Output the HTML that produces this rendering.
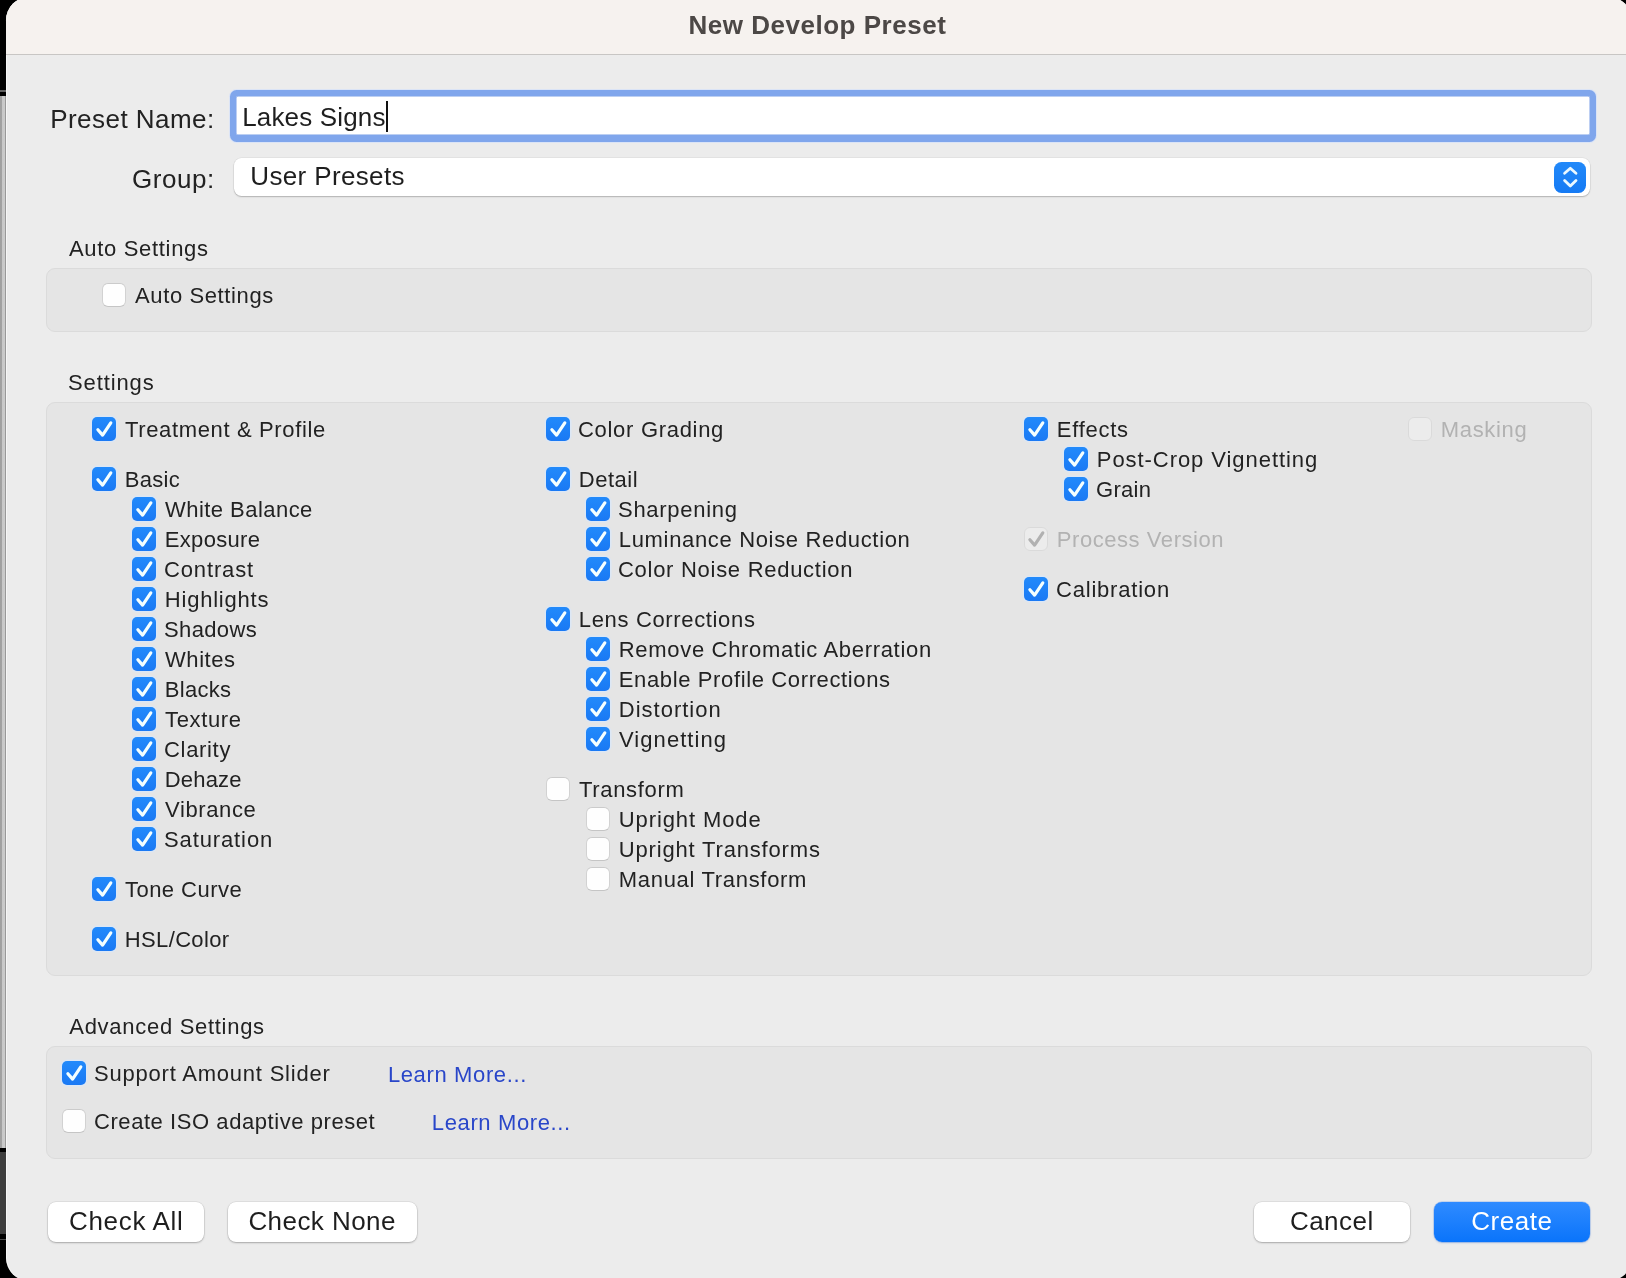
<!DOCTYPE html>
<html lang="en"><head><meta charset="utf-8"><title>New Develop Preset</title>
<style>
html,body{margin:0;padding:0}
body{width:1626px;height:1278px;overflow:hidden;background:#000;position:relative;font-family:"Liberation Sans",sans-serif;color:#222}
.abs,.t,.cb,.box,.btn{position:absolute}
.bg1{left:0;top:96px;width:6px;height:1051.5px;background:linear-gradient(90deg,#a0a0a0 0,#a2a2a2 1.8px,#c8c8c8 2.2px,#cbcbcb 4.6px,#989898 5.2px,#9a9a9a 6px)}
.bg2{left:0;top:1152px;width:6px;height:82px;background:#3d3d3d}
.dlg{left:6px;top:-3.3px;width:1626px;height:1284.6px;background:#ececec;border-radius:23.3px;overflow:hidden;position:absolute;box-shadow:inset 1px 0 0 rgba(255,255,255,.6)}
.tbar{left:0;top:0;width:100%;height:57.3px;background:#f6f2ef;border-bottom:1px solid #c8c6c4;position:absolute}
.t{font-size:22px;line-height:30px;height:30px;white-space:nowrap}
.t.b{font-size:26px}
.box{background:#e5e5e5;border:1px solid #dbdbdb;border-radius:9px;box-sizing:border-box}
.cb{width:24px;height:24px;border-radius:5px;box-sizing:border-box;display:block}
.cb.on{background:linear-gradient(#228afb,#1a79f4);box-shadow:0 0 0 1.5px rgba(214,232,255,.6)}
.cb.off{background:#fefefe;border:1px solid #d2d2d2;border-top-color:#cbcbcb;border-bottom-color:#c5c5c5;border-radius:6px}
.cb.dis{background:#ececec;border-color:#dadada}
.cb svg{width:24px;height:24px;display:block;fill:none;stroke:#f4ffff;stroke-width:3.2;stroke-linecap:round;stroke-linejoin:round}
.cb.off svg{margin:-1px}
.cb.don svg{stroke:#b1b1b1}
.btn{height:40px;top:1202px;border-radius:8px;background:#fff;box-shadow:0 0 0 .5px rgba(0,0,0,.10),0 1px 2px rgba(0,0,0,.25);box-sizing:border-box}
.btn.pri{background:linear-gradient(#2f8bff,#0a74fb);box-shadow:0 0 0 .5px rgba(0,90,230,.3),0 1px 2px rgba(0,80,200,.25)}
.layer{position:absolute;left:0;top:0;width:1626px;height:1278px;will-change:transform}
.bg0{left:0;top:90.4px;width:6px;height:1.4px;background:#616161}
.bg3{left:0;top:1238.5px;width:6px;height:1.3px;background:#4a4a4a}
</style></head>
<body>
<div class="abs bg1"></div><div class="abs bg2"></div><div class="abs bg0"></div><div class="abs bg3"></div>
<div class="dlg"><div class="tbar"></div></div>
<div class="abs" style="left:230px;top:90px;width:1365.5px;height:51.7px;background:#80a6ec;border-radius:6.5px;box-shadow:0 0 0 1px rgba(205,222,255,.55)"></div>
<div class="abs" style="left:236px;top:96.4px;width:1353.5px;height:39.1px;background:#fff;border-radius:2px;box-shadow:inset 0 0 0 .5px #7a9fe6"></div>
<div class="abs" style="left:386.2px;top:100.5px;width:1.7px;height:31px;background:#111"></div>
<div class="abs" style="left:234px;top:158.3px;width:1356px;height:37.6px;background:#fff;border-radius:7.5px;box-shadow:0 0 0 .5px rgba(0,0,0,.07),0 1px 1.5px rgba(0,0,0,.22)"></div>
<div class="abs" style="left:1554px;top:162px;width:32.3px;height:30.5px;border-radius:7.5px;background:linear-gradient(#2289f9,#157af4)"><svg width="32.3" height="30.5" viewBox="0 0 32.3 30.5" style="display:block;fill:none;stroke:#eaf8ff;stroke-width:2.8;stroke-linecap:round;stroke-linejoin:round"><path d="M10.6 11.3 L16.3 6.3 L22 11.3 M10.6 18.4 L16.3 24.1 L22 18.4"/></svg></div>
<div class="box" style="left:46px;top:268px;width:1546px;height:64px"></div>
<div class="box" style="left:46px;top:402px;width:1546px;height:573.5px"></div>
<div class="box" style="left:46px;top:1046px;width:1546px;height:113.3px"></div>
<div class="btn" style="left:47.8px;width:156.4px"></div>
<div class="btn" style="left:228px;width:188.5px"></div>
<div class="btn" style="left:1253.5px;width:156.5px"></div>
<div class="btn pri" style="left:1434px;width:156px"></div>

<div class="layer">
<span class="t" style="left:125.00px;top:415px;letter-spacing:0.641px">Treatment &amp; Profile</span>
<span class="t" style="left:124.80px;top:465px;letter-spacing:0.301px">Basic</span>
<span class="t" style="left:165.00px;top:495px;letter-spacing:0.457px">White Balance</span>
<span class="t" style="left:164.80px;top:525px;letter-spacing:0.313px">Exposure</span>
<span class="t" style="left:164.00px;top:555px;letter-spacing:0.853px">Contrast</span>
<span class="t" style="left:164.80px;top:585px;letter-spacing:0.788px">Highlights</span>
<span class="t" style="left:164.00px;top:615px;letter-spacing:0.366px">Shadows</span>
<span class="t" style="left:165.00px;top:645px;letter-spacing:0.573px">Whites</span>
<span class="t" style="left:164.80px;top:675px;letter-spacing:0.261px">Blacks</span>
<span class="t" style="left:165.00px;top:705px;letter-spacing:0.632px">Texture</span>
<span class="t" style="left:164.00px;top:735px;letter-spacing:0.677px">Clarity</span>
<span class="t" style="left:164.80px;top:765px;letter-spacing:0.161px">Dehaze</span>
<span class="t" style="left:165.00px;top:795px;letter-spacing:0.615px">Vibrance</span>
<span class="t" style="left:164.00px;top:825px;letter-spacing:0.883px">Saturation</span>
<span class="t" style="left:125.00px;top:875px;letter-spacing:0.459px">Tone Curve</span>
<span class="t" style="left:124.80px;top:925px;letter-spacing:0.356px">HSL/Color</span>
<span class="t" style="left:578.00px;top:415px;letter-spacing:0.699px">Color Grading</span>
<span class="t" style="left:578.80px;top:465px;letter-spacing:0.508px">Detail</span>
<span class="t" style="left:618.00px;top:495px;letter-spacing:0.711px">Sharpening</span>
<span class="t" style="left:618.80px;top:525px;letter-spacing:0.661px">Luminance Noise Reduction</span>
<span class="t" style="left:618.00px;top:555px;letter-spacing:0.716px">Color Noise Reduction</span>
<span class="t" style="left:578.80px;top:605px;letter-spacing:0.653px">Lens Corrections</span>
<span class="t" style="left:618.80px;top:635px;letter-spacing:0.679px">Remove Chromatic Aberration</span>
<span class="t" style="left:618.80px;top:665px;letter-spacing:0.629px">Enable Profile Corrections</span>
<span class="t" style="left:618.80px;top:695px;letter-spacing:1.002px">Distortion</span>
<span class="t" style="left:619.00px;top:725px;letter-spacing:1.065px">Vignetting</span>
<span class="t" style="left:579.00px;top:775px;letter-spacing:0.663px">Transform</span>
<span class="t" style="left:618.80px;top:805px;letter-spacing:0.897px">Upright Mode</span>
<span class="t" style="left:618.80px;top:835px;letter-spacing:0.826px">Upright Transforms</span>
<span class="t" style="left:618.80px;top:865px;letter-spacing:0.689px">Manual Transform</span>
<span class="t" style="left:1056.80px;top:415px;letter-spacing:0.725px">Effects</span>
<span class="t" style="left:1096.80px;top:445px;letter-spacing:0.939px">Post-Crop Vignetting</span>
<span class="t" style="left:1096.00px;top:475px;letter-spacing:0.310px">Grain</span>
<span class="t" style="left:1056.80px;top:525px;letter-spacing:0.555px;color:#b2b2b2">Process Version</span>
<span class="t" style="left:1056.00px;top:575px;letter-spacing:0.797px">Calibration</span>
<span class="t" style="left:1440.80px;top:415px;letter-spacing:0.653px;color:#b2b2b2">Masking</span>
<span class="t" style="left:135.00px;top:281px;letter-spacing:0.620px">Auto Settings</span>
<span class="t" style="left:94.00px;top:1059px;letter-spacing:0.784px">Support Amount Slider</span>
<span class="t" style="left:94.00px;top:1107px;letter-spacing:0.565px">Create ISO adaptive preset</span>
<span class="t" style="left:387.90px;top:1060px;letter-spacing:0.631px;color:#2946c9">Learn More...</span>
<span class="t" style="left:431.80px;top:1108px;letter-spacing:0.631px;color:#2946c9">Learn More...</span>
<span class="t" style="left:69.00px;top:234px;letter-spacing:0.678px">Auto Settings</span>
<span class="t" style="left:68.00px;top:368px;letter-spacing:0.887px">Settings</span>
<span class="t" style="left:69.30px;top:1012px;letter-spacing:0.709px">Advanced Settings</span>
<span class="t b" style="left:688.40px;top:10px;letter-spacing:0.524px;color:#4c4846;font-weight:bold">New Develop Preset</span>
<span class="t b" style="left:50.20px;top:104px;letter-spacing:0.462px">Preset Name:</span>
<span class="t b" style="left:131.90px;top:164px;letter-spacing:0.568px">Group:</span>
<span class="t b" style="left:242.20px;top:102px;letter-spacing:0.166px;color:#1e1e1e">Lakes Signs</span>
<span class="t b" style="left:250.30px;top:161px;letter-spacing:0.358px;color:#1e1e1e">User Presets</span>
<span class="t b" style="left:69.00px;top:1206px;letter-spacing:0.670px;color:#1e1e1e">Check All</span>
<span class="t b" style="left:248.40px;top:1206px;letter-spacing:0.443px;color:#1e1e1e">Check None</span>
<span class="t b" style="left:1289.90px;top:1206px;letter-spacing:0.489px;color:#1e1e1e">Cancel</span>
<span class="t b" style="left:1471.30px;top:1206px;letter-spacing:0.524px;color:#ffffff">Create</span>
<i class="cb on" style="left:92px;top:417px"><svg viewBox="0 0 24 24"><path d="M5.9 12.7 L10.6 18.1 L18.8 5.9"/></svg></i>
<i class="cb on" style="left:92px;top:467px"><svg viewBox="0 0 24 24"><path d="M5.9 12.7 L10.6 18.1 L18.8 5.9"/></svg></i>
<i class="cb on" style="left:132px;top:497px"><svg viewBox="0 0 24 24"><path d="M5.9 12.7 L10.6 18.1 L18.8 5.9"/></svg></i>
<i class="cb on" style="left:132px;top:527px"><svg viewBox="0 0 24 24"><path d="M5.9 12.7 L10.6 18.1 L18.8 5.9"/></svg></i>
<i class="cb on" style="left:132px;top:557px"><svg viewBox="0 0 24 24"><path d="M5.9 12.7 L10.6 18.1 L18.8 5.9"/></svg></i>
<i class="cb on" style="left:132px;top:587px"><svg viewBox="0 0 24 24"><path d="M5.9 12.7 L10.6 18.1 L18.8 5.9"/></svg></i>
<i class="cb on" style="left:132px;top:617px"><svg viewBox="0 0 24 24"><path d="M5.9 12.7 L10.6 18.1 L18.8 5.9"/></svg></i>
<i class="cb on" style="left:132px;top:647px"><svg viewBox="0 0 24 24"><path d="M5.9 12.7 L10.6 18.1 L18.8 5.9"/></svg></i>
<i class="cb on" style="left:132px;top:677px"><svg viewBox="0 0 24 24"><path d="M5.9 12.7 L10.6 18.1 L18.8 5.9"/></svg></i>
<i class="cb on" style="left:132px;top:707px"><svg viewBox="0 0 24 24"><path d="M5.9 12.7 L10.6 18.1 L18.8 5.9"/></svg></i>
<i class="cb on" style="left:132px;top:737px"><svg viewBox="0 0 24 24"><path d="M5.9 12.7 L10.6 18.1 L18.8 5.9"/></svg></i>
<i class="cb on" style="left:132px;top:767px"><svg viewBox="0 0 24 24"><path d="M5.9 12.7 L10.6 18.1 L18.8 5.9"/></svg></i>
<i class="cb on" style="left:132px;top:797px"><svg viewBox="0 0 24 24"><path d="M5.9 12.7 L10.6 18.1 L18.8 5.9"/></svg></i>
<i class="cb on" style="left:132px;top:827px"><svg viewBox="0 0 24 24"><path d="M5.9 12.7 L10.6 18.1 L18.8 5.9"/></svg></i>
<i class="cb on" style="left:92px;top:877px"><svg viewBox="0 0 24 24"><path d="M5.9 12.7 L10.6 18.1 L18.8 5.9"/></svg></i>
<i class="cb on" style="left:92px;top:927px"><svg viewBox="0 0 24 24"><path d="M5.9 12.7 L10.6 18.1 L18.8 5.9"/></svg></i>
<i class="cb on" style="left:546px;top:417px"><svg viewBox="0 0 24 24"><path d="M5.9 12.7 L10.6 18.1 L18.8 5.9"/></svg></i>
<i class="cb on" style="left:546px;top:467px"><svg viewBox="0 0 24 24"><path d="M5.9 12.7 L10.6 18.1 L18.8 5.9"/></svg></i>
<i class="cb on" style="left:586px;top:497px"><svg viewBox="0 0 24 24"><path d="M5.9 12.7 L10.6 18.1 L18.8 5.9"/></svg></i>
<i class="cb on" style="left:586px;top:527px"><svg viewBox="0 0 24 24"><path d="M5.9 12.7 L10.6 18.1 L18.8 5.9"/></svg></i>
<i class="cb on" style="left:586px;top:557px"><svg viewBox="0 0 24 24"><path d="M5.9 12.7 L10.6 18.1 L18.8 5.9"/></svg></i>
<i class="cb on" style="left:546px;top:607px"><svg viewBox="0 0 24 24"><path d="M5.9 12.7 L10.6 18.1 L18.8 5.9"/></svg></i>
<i class="cb on" style="left:586px;top:637px"><svg viewBox="0 0 24 24"><path d="M5.9 12.7 L10.6 18.1 L18.8 5.9"/></svg></i>
<i class="cb on" style="left:586px;top:667px"><svg viewBox="0 0 24 24"><path d="M5.9 12.7 L10.6 18.1 L18.8 5.9"/></svg></i>
<i class="cb on" style="left:586px;top:697px"><svg viewBox="0 0 24 24"><path d="M5.9 12.7 L10.6 18.1 L18.8 5.9"/></svg></i>
<i class="cb on" style="left:586px;top:727px"><svg viewBox="0 0 24 24"><path d="M5.9 12.7 L10.6 18.1 L18.8 5.9"/></svg></i>
<i class="cb off" style="left:546px;top:777px"></i>
<i class="cb off" style="left:586px;top:807px"></i>
<i class="cb off" style="left:586px;top:837px"></i>
<i class="cb off" style="left:586px;top:867px"></i>
<i class="cb on" style="left:1024px;top:417px"><svg viewBox="0 0 24 24"><path d="M5.9 12.7 L10.6 18.1 L18.8 5.9"/></svg></i>
<i class="cb on" style="left:1064px;top:447px"><svg viewBox="0 0 24 24"><path d="M5.9 12.7 L10.6 18.1 L18.8 5.9"/></svg></i>
<i class="cb on" style="left:1064px;top:477px"><svg viewBox="0 0 24 24"><path d="M5.9 12.7 L10.6 18.1 L18.8 5.9"/></svg></i>
<i class="cb off dis don" style="left:1024px;top:527px"><svg viewBox="0 0 24 24"><path d="M5.9 12.7 L10.6 18.1 L18.8 5.9"/></svg></i>
<i class="cb on" style="left:1024px;top:577px"><svg viewBox="0 0 24 24"><path d="M5.9 12.7 L10.6 18.1 L18.8 5.9"/></svg></i>
<i class="cb off dis" style="left:1408px;top:417px"></i>
<i class="cb off" style="left:102px;top:283px"></i>
<i class="cb on" style="left:62px;top:1061px"><svg viewBox="0 0 24 24"><path d="M5.9 12.7 L10.6 18.1 L18.8 5.9"/></svg></i>
<i class="cb off" style="left:62px;top:1109px"></i>
</div>
</body></html>
